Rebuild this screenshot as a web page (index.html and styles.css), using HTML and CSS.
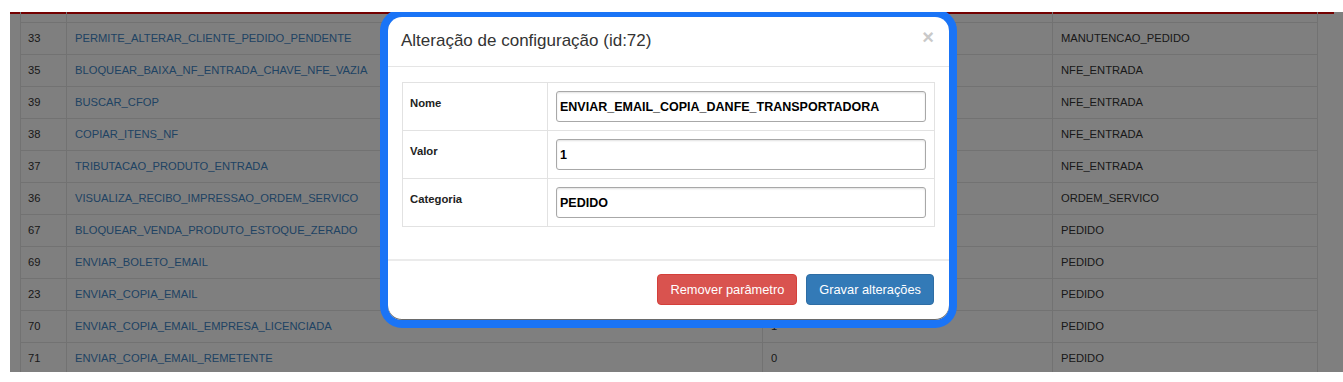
FILE: index.html
```html
<!DOCTYPE html>
<html lang="pt-BR">
<head>
  <meta charset="UTF-8" />
  <meta name="viewport" content="width=device-width, initial-scale=1.0"/>
  <title>Configurações</title>
  <link rel="stylesheet" href="styles.css">
</head>
<body>
  <div class="screen">
    <div class="topbar"></div>

    <div class="list">
      <table class="config-table">
        <colgroup>
          <col class="col-id">
          <col class="col-name">
          <col class="col-value">
          <col class="col-cat">
        </colgroup>
        <thead>
          <tr><th></th><th></th><th></th><th></th></tr>
        </thead>
        <tbody>
          <tr><td>33</td><td><a href="#">PERMITE_ALTERAR_CLIENTE_PEDIDO_PENDENTE</a></td><td></td><td>MANUTENCAO_PEDIDO</td></tr>
          <tr><td>35</td><td><a href="#">BLOQUEAR_BAIXA_NF_ENTRADA_CHAVE_NFE_VAZIA</a></td><td></td><td>NFE_ENTRADA</td></tr>
          <tr><td>39</td><td><a href="#">BUSCAR_CFOP</a></td><td></td><td>NFE_ENTRADA</td></tr>
          <tr><td>38</td><td><a href="#">COPIAR_ITENS_NF</a></td><td></td><td>NFE_ENTRADA</td></tr>
          <tr><td>37</td><td><a href="#">TRIBUTACAO_PRODUTO_ENTRADA</a></td><td></td><td>NFE_ENTRADA</td></tr>
          <tr><td>36</td><td><a href="#">VISUALIZA_RECIBO_IMPRESSAO_ORDEM_SERVICO</a></td><td></td><td>ORDEM_SERVICO</td></tr>
          <tr><td>67</td><td><a href="#">BLOQUEAR_VENDA_PRODUTO_ESTOQUE_ZERADO</a></td><td></td><td>PEDIDO</td></tr>
          <tr><td>69</td><td><a href="#">ENVIAR_BOLETO_EMAIL</a></td><td></td><td>PEDIDO</td></tr>
          <tr><td>23</td><td><a href="#">ENVIAR_COPIA_EMAIL</a></td><td></td><td>PEDIDO</td></tr>
          <tr><td>70</td><td><a href="#">ENVIAR_COPIA_EMAIL_EMPRESA_LICENCIADA</a></td><td>1</td><td>PEDIDO</td></tr>
          <tr><td>71</td><td><a href="#">ENVIAR_COPIA_EMAIL_REMETENTE</a></td><td>0</td><td>PEDIDO</td></tr>
        </tbody>
      </table>
    </div>

    <div class="backdrop"></div>

    <!-- Modal (highlighted) -->
    <div class="modal-ring">
      <div class="modal-content">
        <div class="modal-header">
          <h4 class="modal-title">Alteração de configuração (id:72)</h4>
          <span class="close">&times;</span>
        </div>
        <div class="modal-body">
          <table class="form-table">
            <tr>
              <th>Nome</th>
              <td><input type="text" value="ENVIAR_EMAIL_COPIA_DANFE_TRANSPORTADORA"></td>
            </tr>
            <tr>
              <th>Valor</th>
              <td><input type="text" value="1"></td>
            </tr>
            <tr>
              <th>Categoria</th>
              <td><input type="text" value="PEDIDO"></td>
            </tr>
          </table>
        </div>
        <div class="modal-footer">
          <button class="btn btn-danger">Remover parâmetro</button>
          <button class="btn btn-primary">Gravar alterações</button>
        </div>
      </div>
    </div>
  </div>
</body>
</html>
```

FILE: styles.css
```css
body {
  margin: 0;
  background-color: #fff;
  font-family: 'Liberation Sans', Arial, sans-serif;
  color: #333;
}
.screen {
  position: relative;
  margin: 12px 0 0 10px;
  height: 360px;
  overflow: hidden;
  background-color: #fff;
}
.topbar {
  width: 1324px;
  height: 2px;
  background-color: #e80000;
}
.list {
  padding: 0 0 0 10px;
}
.config-table {
  width: 1298px;
  margin-top: -24px;
  table-layout: fixed;
  border-collapse: collapse;
  font-size: 11.2px;
}
.col-id { width: 46px; }
.col-name { width: 696px; }
.col-value { width: 290px; }
.col-cat { width: 265px; }
.config-table th,
.config-table td {
  border: 1px solid #e4e4e4;
  height: 15px;
  padding: 8px 7px 8px 8px;
  line-height: 15px;
  text-align: left;
  white-space: nowrap;
  overflow: hidden;
}
.config-table td:first-child {
  padding-left: 7px;
}
.config-table a {
  color: #3f86c6;
  text-decoration: none;
}
.backdrop {
  position: absolute;
  inset: 0;
  background-color: rgba(0, 0, 0, 0.5);
}
.modal-ring {
  position: absolute;
  left: 370px;
  top: -3px;
  width: 577px;
  box-sizing: border-box;
  border: 8px solid #1a74f6;
  border-radius: 22px;
  background-color: #1a74f6;
}
.modal-content {
  background-color: #fff;
  border-radius: 14px;
  box-shadow: inset 0 -1px 0 #6a6a6a;
}
.modal-header {
  display: flex;
  justify-content: space-between;
  align-items: flex-start;
  padding: 14px 13px 15px;
  border-bottom: 1px solid #e5e5e5;
}
.modal-title {
  margin: 0;
  font-size: 17px;
  font-weight: normal;
  line-height: 20px;
  color: #333;
}
.close {
  margin: -3px 2px 0 0;
  font-size: 20px;
  font-weight: bold;
  line-height: 18px;
  color: #c9c9c9;
}
.modal-body {
  padding: 15px 14px;
}
.form-table {
  width: 100%;
  border-collapse: collapse;
  margin-bottom: 17px;
}
.form-table th,
.form-table td {
  border: 1px solid #e2e2e2;
  padding: 8px;
  vertical-align: middle;
}
.form-table th {
  width: 129px;
  padding: 4px 8px 11px 7px;
  text-align: left;
  font-size: 11.3px;
  color: #222;
}
.form-table input {
  display: block;
  width: 100%;
  height: 31px;
  box-sizing: border-box;
  padding: 0 3px;
  border: 1px solid #a8a8a8;
  border-radius: 3px;
  box-shadow: inset 0 1px 2px rgba(0, 0, 0, 0.12);
  font-family: 'Liberation Sans', Arial, sans-serif;
  font-size: 12.5px;
  font-weight: bold;
  color: #000;
}
.modal-footer {
  display: flex;
  justify-content: flex-end;
  gap: 9px;
  padding: 13px 15px 15px;
  border-top: 2px solid #ebebeb;
}
.btn {
  height: 31px;
  padding: 0 12px;
  border: 1px solid transparent;
  border-radius: 4px;
  font-family: 'Liberation Sans', Arial, sans-serif;
  font-size: 12.8px;
  color: #fff;
  cursor: pointer;
}
.btn-danger {
  background-color: #d9534f;
  border-color: #d43f3a;
}
.btn-primary {
  background-color: #337ab7;
  border-color: #2e6da4;
}
```
